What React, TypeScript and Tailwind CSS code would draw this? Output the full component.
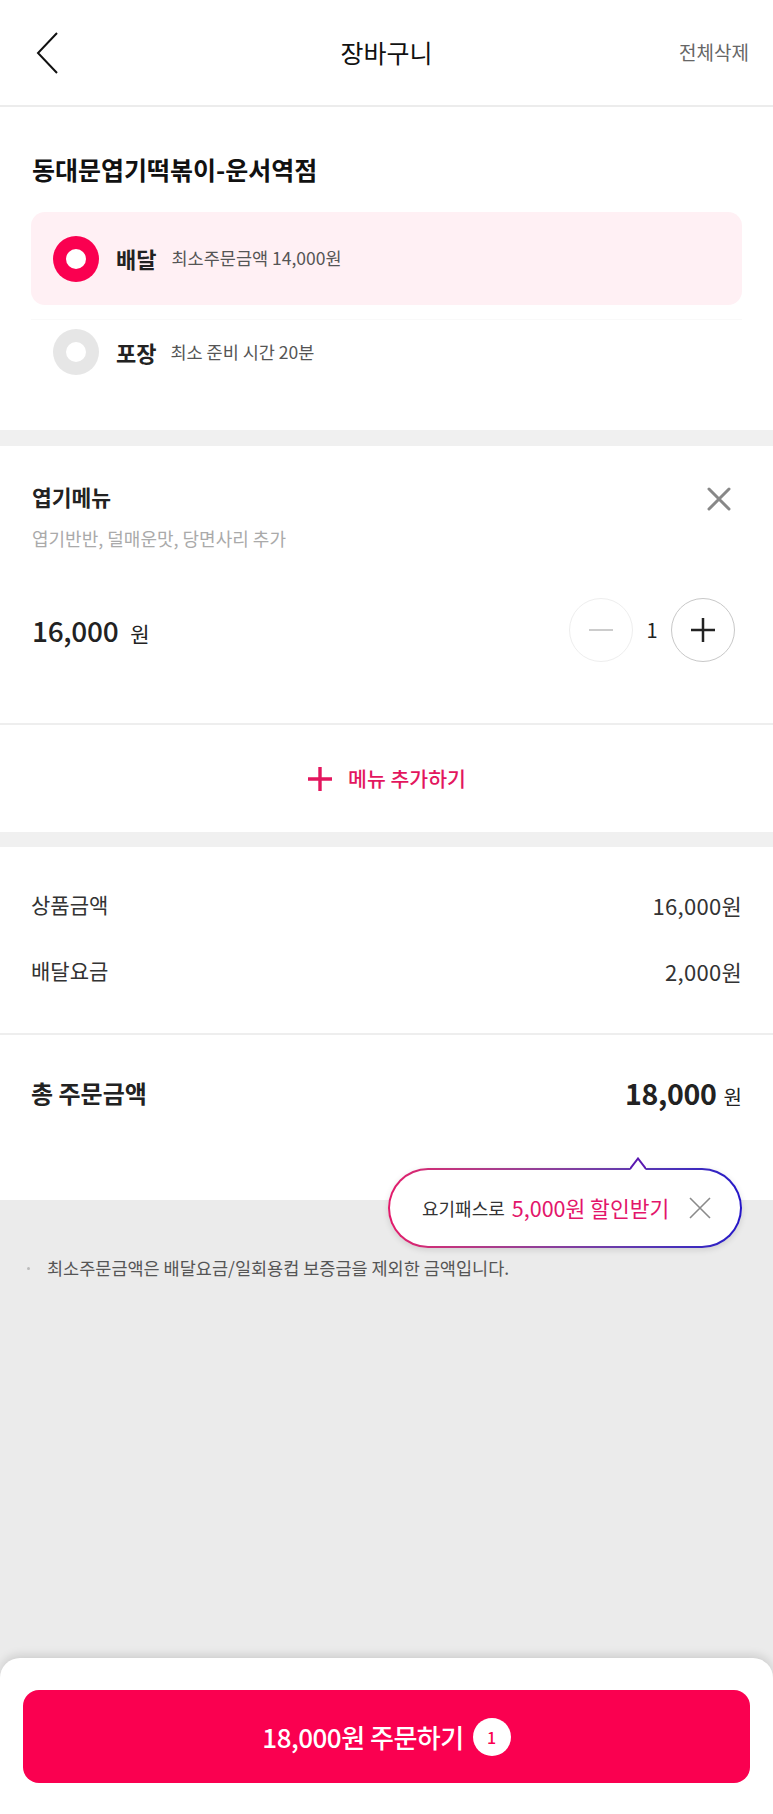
import React from "react";

function Radio({ on }: { on: boolean }) {
  return (
    <div
      className={
        on
          ? "w-[46px] h-[46px] rounded-full bg-[#fa0050] flex items-center justify-center shrink-0"
          : "w-[46px] h-[46px] rounded-full bg-[#e6e6e6] flex items-center justify-center shrink-0"
      }
    >
      <div className="w-[20px] h-[20px] rounded-full bg-white" />
    </div>
  );
}

function SumRow({ label, value }: { label: string; value: string }) {
  return (
    <div className="flex justify-between items-center h-[28px] text-[#333]">
      <span className="text-[21px]">{label}</span>
      <span className="text-[22px] tracking-[0.3px]">{value}</span>
    </div>
  );
}

export default function App() {
  return (
    <div className="min-h-[1814px] flex flex-col bg-[#ebebeb] font-['Noto_Sans_CJK_KR','Noto_Sans',sans-serif] text-[#222]">
      {/* header */}
      <div className="h-[107px] bg-white border-b-2 border-[#ececec] flex items-center justify-between px-[31px] relative">
        <svg width="24" height="42" viewBox="0 0 24 42" className="ml-[5px]">
          <polyline points="21,1 2,21 21,41" fill="none" stroke="#111" strokeWidth="2" />
        </svg>
        <h1 className="absolute left-0 right-0 text-center text-[25px] text-[#111] pointer-events-none">장바구니</h1>
        <span className="text-[19px] text-[#666] -mr-[7px]">전체삭제</span>
      </div>

      {/* store */}
      <div className="bg-white pt-[47px] pb-[55px]">
        <h2 className="px-[32px] text-[25px] font-bold leading-[30px] text-[#111]">
          동대문엽기떡볶이-운서역점
        </h2>
        <div className="mx-[31px] mt-[28px] h-[93px] rounded-[14px] bg-[#fff0f4] flex items-center pl-[22px]">
          <Radio on />
          <span className="ml-[17px] text-[22px] font-bold text-[#222]">배달</span>
          <span className="ml-[15px] text-[17.5px] text-[#555]">최소주문금액 14,000원</span>
        </div>
        <div className="mx-[31px] mt-[14px] h-px bg-[#f9f9f9]" />
        <div className="mx-[31px] mt-[9px] h-[46px] flex items-center pl-[22px]">
          <Radio on={false} />
          <span className="ml-[17px] text-[22px] font-bold text-[#222]">포장</span>
          <span className="ml-[14px] text-[17.5px] text-[#555]">최소 준비 시간 20분</span>
        </div>
      </div>

      <div className="h-[16px] bg-[#f0f0f0]" />

      {/* menu item */}
      <div className="bg-white">
        <div className="pt-[38px] pb-[61px] pl-[32px] pr-[38px]">
          <div className="flex justify-between items-center h-[26px]">
            <span className="text-[21.5px] font-bold text-[#222]">엽기메뉴</span>
            <svg width="24" height="24" viewBox="0 0 24 24" className="mr-[4px] mt-[4px]">
              <path d="M2 2 L22 22 M22 2 L2 22" stroke="#888" strokeWidth="3" strokeLinecap="round" />
            </svg>
          </div>
          <div className="mt-[17px] text-[18px] leading-[22px] text-[#aaa]">엽기반반, 덜매운맛, 당면사리 추가</div>
          <div className="mt-[49px] flex justify-between items-center h-[64px]">
            <div className="flex items-baseline text-[#222]">
              <span className="text-[28px] font-medium tracking-[-0.3px]">16,000</span>
              <span className="ml-[12px] text-[21px]">원</span>
            </div>
            <div className="flex items-center">
              <div className="w-[64px] h-[64px] rounded-full border-[1.5px] border-[#eeeeee] flex items-center justify-center">
                <div className="w-[24px] h-[2px] bg-[#cccccc]" />
              </div>
              <span className="w-[38px] text-center text-[20px] text-[#222]">1</span>
              <div className="w-[64px] h-[64px] rounded-full border-[1.5px] border-[#c8c8c8] flex items-center justify-center">
                <svg width="26" height="26" viewBox="0 0 26 26">
                  <path d="M13 1 V25 M1 13 H25" stroke="#222" strokeWidth="2.5" />
                </svg>
              </div>
            </div>
          </div>
        </div>
        <div className="h-[2px] bg-[#eeeeee]" />
        <div className="h-[107px] flex items-center justify-center gap-[15px] text-[#e3165e]">
          <svg width="26" height="26" viewBox="0 0 26 26">
            <path d="M13 1 V25 M1 13 H25" stroke="#e3165e" strokeWidth="3.4" />
          </svg>
          <span className="text-[20.5px] font-medium">메뉴 추가하기</span>
        </div>
      </div>

      <div className="h-[15px] bg-[#f0f0f0]" />

      {/* summary */}
      <div className="bg-white relative z-10">
        <div className="px-[31px] pt-[44px]">
          <SumRow label="상품금액" value="16,000원" />
          <div className="mt-[38px]">
            <SumRow label="배달요금" value="2,000원" />
          </div>
        </div>
        <div className="mt-[48px] h-[2px] bg-[#eeeeee]" />
        <div className="px-[31px] pt-[42px] pb-[91px] flex justify-between items-center h-[165px] box-border">
          <span className="text-[24px] font-bold text-[#222] leading-[32px]">총 주문금액</span>
          <div className="flex items-baseline text-[#222]">
            <span className="text-[28.5px] font-bold tracking-[-0.3px]">18,000</span>
            <span className="ml-[7px] text-[20px]">원</span>
          </div>
        </div>

        {/* yogipass bubble */}
        <div className="absolute top-[321px] right-[31px] w-[354px] h-[80px]">
          <svg width="16" height="13" viewBox="0 0 16 13" className="absolute left-[242px] -top-[11px] z-10">
            <polygon points="0,13 8,2 16,13" fill="white" />
            <polyline points="0,12 8,1.5 16,12" fill="none" stroke="#5a18b0" strokeWidth="2" />
          </svg>
          <div className="w-full h-full rounded-full p-[2px] bg-gradient-to-r from-[#e3186a] to-[#2414c8] shadow-[0_2px_6px_rgba(0,0,0,0.12)]">
            <div className="w-full h-full rounded-full bg-white flex items-center pl-[32px] pr-[28px]">
              <span className="text-[18px] text-[#333]">요기패스로</span>
              <span className="ml-[7px] text-[21.5px] text-[#e3156a]">5,000원 할인받기</span>
              <svg width="24" height="24" viewBox="0 0 24 24" className="ml-auto">
                <path d="M2 2 L22 22 M22 2 L2 22" stroke="#8a8a8a" strokeWidth="1.6" />
              </svg>
            </div>
          </div>
        </div>
      </div>

      {/* note */}
      <div className="flex-1 pt-[57px] pl-[27px] pr-[31px]">
        <div className="flex items-center text-[17.5px] leading-[22px] text-[#555]">
          <span className="w-[3px] h-[3px] rounded-full bg-[#bbb]" />
          <span className="ml-[17px]">최소주문금액은 배달요금/일회용컵 보증금을 제외한 금액입니다.</span>
        </div>
      </div>

      {/* bottom sheet */}
      <div className="h-[156px] bg-white rounded-t-[20px] shadow-[0_-3px_10px_rgba(0,0,0,0.13)] px-[23px] pt-[32px]">
        <button className="w-full h-[93px] rounded-[16px] bg-[#fa0050] flex items-center justify-center gap-[9px] text-white">
          <span className="text-[26px] font-medium tracking-[-0.5px]">18,000원 주문하기</span>
          <span className="w-[38px] h-[38px] rounded-full bg-white text-[#fa0050] text-[16px] font-medium flex items-center justify-center">
            1
          </span>
        </button>
      </div>
    </div>
  );
}
